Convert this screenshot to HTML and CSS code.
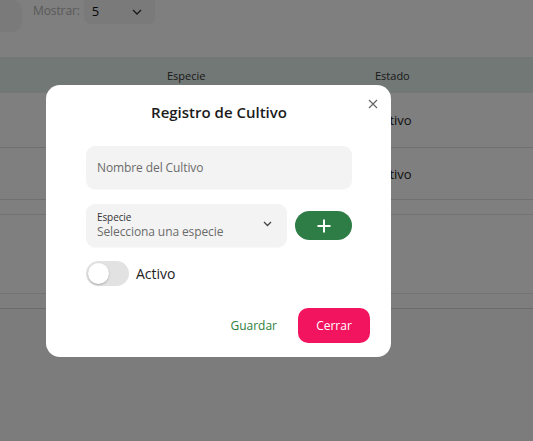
FILE: index.html
```html
<!DOCTYPE html>
<html lang="es">
<head>
<meta charset="utf-8">
<title>Registro de Cultivo</title>
<link rel="stylesheet" href="styles.css">
</head>
<body>
<div class="page">
  <div class="toolbar">
    <div class="search"></div>
    <span class="show-label">Mostrar:</span>
    <div class="show-select">
      <span>5</span>
      <svg class="chev" width="10" height="6" viewBox="0 0 10 6"><path d="M1 1l4 4 4-4" fill="none" stroke="#333" stroke-width="1.3"/></svg>
    </div>
  </div>
  <div class="table">
    <div class="thead">
      <span></span><span>Especie</span><span>Estado</span>
    </div>
    <div class="trow r1"><span></span><span></span><span>Activo</span></div>
    <div class="trow r2"><span></span><span></span><span>Activo</span></div>
    <div class="tspacer s1"></div>
    <div class="tspacer s2"></div>
    <div class="tspacer s3"></div>
  </div>
</div>

<div class="overlay">
  <div class="modal">
    <button class="close" aria-label="Cerrar">
      <svg width="10" height="10" viewBox="0 0 10 10"><path d="M1 1l8 8M9 1l-8 8" fill="none" stroke="#666" stroke-width="1.2"/></svg>
    </button>
    <h2 class="title">Registro de Cultivo</h2>
    <div class="field">Nombre del Cultivo</div>
    <div class="select-row">
      <div class="field select">
        <div class="sel-text">
          <span class="sel-label">Especie</span>
          <span class="sel-ph">Selecciona una especie</span>
        </div>
        <svg class="chev2" width="9" height="6" viewBox="0 0 9 6"><path d="M1 1l3.5 3.5L8 1" fill="none" stroke="#444" stroke-width="1.3"/></svg>
      </div>
      <button class="add">
        <svg width="14" height="14" viewBox="0 0 14 14"><path d="M7 0.5v13M0.5 7h13" fill="none" stroke="#fff" stroke-width="2"/></svg>
      </button>
    </div>
    <div class="toggle-row">
      <span class="toggle"><span class="knob"></span></span>
      <span class="toggle-label">Activo</span>
    </div>
    <div class="actions">
      <button class="btn-text">Guardar</button>
      <button class="btn-primary">Cerrar</button>
    </div>
  </div>
</div>
</body>
</html>
```

FILE: styles.css
```css
* { box-sizing: border-box; }
html, body { margin: 0; padding: 0; }
body {
  width: 533px;
  height: 441px;
  overflow: hidden;
  font-family: "Open Sans", "Noto Sans", sans-serif;
  background: #f6f8f6;
  color: #222;
}
.page { background: #fefefe; }
.toolbar {
  display: flex;
  align-items: flex-start;
  height: 57px;
}
.search {
  width: 22px;
  height: 32px;
  background: #f4f4f4;
  border-radius: 0 10px 10px 0;
}
.show-label {
  margin-left: 11px;
  margin-top: 2px;
  font-size: 12px;
  letter-spacing: -0.1px;
  color: #b4b4b4;
  line-height: 18px;
}
.show-select {
  margin-left: 4px;
  width: 71px;
  height: 24px;
  background: #f4f4f4;
  border-radius: 0 0 7px 7px;
  display: flex;
  align-items: flex-start;
  padding: 2px 0 0 8px;
  font-size: 13px;
  line-height: 18px;
  color: #111;
}
.show-select .chev { margin-left: 33px; margin-top: 7px; }

.table { font-size: 13px; }
.thead, .trow {
  display: grid;
  grid-template-columns: 167px 208px 1fr;
  align-items: center;
}
.thead {
  height: 36px;
  background: #e4f0ec;
  font-size: 11px;
  color: #333;
}
.trow { border-bottom: 1px solid #e0e0e0; color: #222; }
.r1 { height: 55px; }
.r2 { height: 52px; }
.tspacer { border-bottom: 1px solid #e6e6e6; }
.s1 { height: 15px; }
.s2 { height: 79px; }
.s3 { height: 15px; border-bottom: 1px solid #d8d8d8; background: #fcfcfc; }

.overlay {
  position: fixed;
  inset: 0;
  background: rgba(0, 0, 0, 0.5);
}
.modal {
  position: absolute;
  left: 46px;
  top: 85px;
  width: 345px;
  height: 272px;
  background: #fff;
  border-radius: 14px;
  padding: 17px 39px 0 40px;
}
.close {
  position: absolute;
  top: 13px;
  right: 12px;
  border: 0;
  background: none;
  padding: 0;
  width: 12px;
  height: 12px;
  display: flex;
  align-items: center;
  justify-content: center;
}
.title {
  margin: 0;
  text-align: center;
  font-size: 15px;
  font-weight: 600;
  line-height: 20px;
  color: #1b1b1b;
}
.field {
  margin-top: 24px;
  height: 43px;
  background: #f3f3f3;
  border-radius: 9px;
  padding-left: 11px;
  display: flex;
  align-items: center;
  font-size: 12px;
  letter-spacing: -0.1px;
  color: #6b6b6b;
  box-shadow: 0 1px 1px rgba(0,0,0,0.03);
}
.select-row {
  margin-top: 15px;
  display: flex;
  align-items: center;
  gap: 8px;
}
.field.select {
  margin-top: 0;
  width: 201px;
  justify-content: space-between;
  padding-right: 15px;
}
.sel-text { display: flex; flex-direction: column; }
.sel-label { font-size: 10px; line-height: 12px; color: #333; letter-spacing: -0.1px; }
.sel-ph { font-size: 12px; line-height: 17px; color: #6b6b6b; }
.chev2 { margin-top: -3px; }
.add {
  width: 57px;
  height: 29px;
  border: 0;
  border-radius: 15px;
  background: #2e7d46;
  display: flex;
  align-items: center;
  justify-content: center;
  padding: 0;
}
.toggle-row {
  margin-top: 14px;
  display: flex;
  align-items: center;
  gap: 7px;
}
.toggle {
  width: 43px;
  height: 25px;
  border-radius: 13px;
  background: #e2e2e2;
  display: flex;
  align-items: center;
  padding-left: 2px;
}
.knob {
  width: 21px;
  height: 21px;
  border-radius: 50%;
  background: #fff;
  box-shadow: 0 1px 2px rgba(0,0,0,0.25);
}
.toggle-label { font-size: 14px; color: #222; }
.actions {
  margin-top: 22px;
  margin-right: -18px;
  display: flex;
  justify-content: flex-end;
  align-items: center;
  gap: 13px;
}
.btn-text {
  border: 0;
  background: none;
  font-family: inherit;
  font-size: 12px;
  color: #2e7d3a;
  padding: 0 8px;
}
.btn-primary {
  width: 72px;
  height: 35px;
  border: 0;
  border-radius: 10px;
  background: #f3145f;
  color: #fff;
  font-family: inherit;
  font-size: 12px;
  padding: 0;
}
```
